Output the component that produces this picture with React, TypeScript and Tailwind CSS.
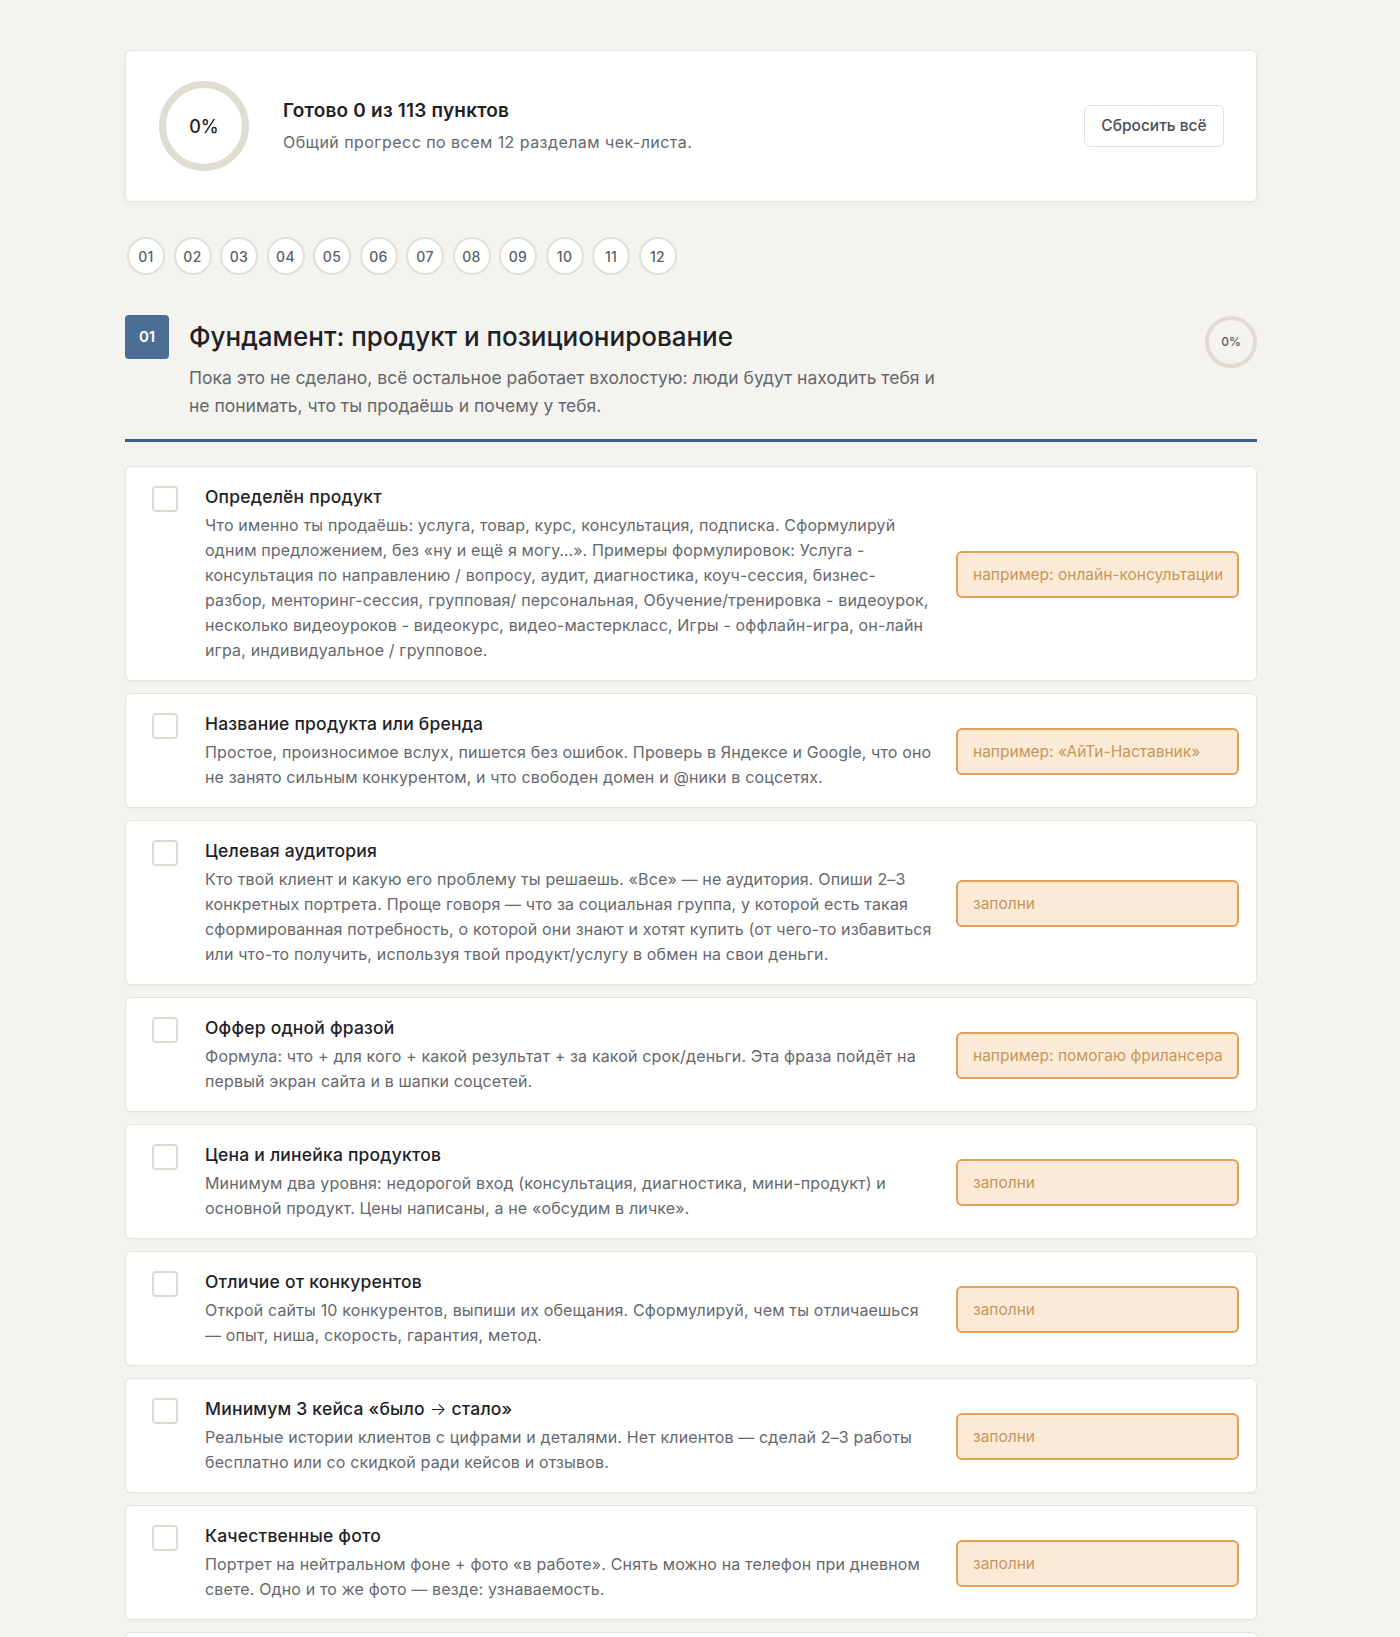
import { useState } from "react";

// Чек-лист запуска: общий прогресс, навигация по разделам и пункты первого раздела.
type Item = { title: string; text: string; placeholder: string };

const sections = ["01", "02", "03", "04", "05", "06", "07", "08", "09", "10", "11", "12"];

const items: Item[] = [
  {
    title: "Определён продукт",
    text: "Что именно ты продаёшь: услуга, товар, курс, консультация, подписка. Сформулируй одним предложением, без «ну и ещё я могу…». Примеры формулировок: Услуга - консультация по направлению / вопросу, аудит, диагностика, коуч-сессия, бизнес-разбор, менторинг-сессия, групповая/ персональная, Обучение/тренировка - видеоурок, несколько видеоуроков - видеокурс, видео-мастеркласс, Игры - оффлайн-игра, он-лайн игра, индивидуальное / групповое.",
    placeholder: "например: онлайн-консультации по карьере",
  },
  {
    title: "Название продукта или бренда",
    text: "Простое, произносимое вслух, пишется без ошибок. Проверь в Яндексе и Google, что оно не занято сильным конкурентом, и что свободен домен и @ники в соцсетях.",
    placeholder: "например: «АйТи-Наставник»",
  },
  {
    title: "Целевая аудитория",
    text: "Кто твой клиент и какую его проблему ты решаешь. «Все» — не аудитория. Опиши 2–3 конкретных портрета. Проще говоря — что за социальная группа, у которой есть такая сформированная потребность, о которой они знают и хотят купить (от чего-то избавиться или что-то получить, используя твой продукт/услугу в обмен на свои деньги.",
    placeholder: "заполни",
  },
  {
    title: "Оффер одной фразой",
    text: "Формула: что + для кого + какой результат + за какой срок/деньги. Эта фраза пойдёт на первый экран сайта и в шапки соцсетей.",
    placeholder: "например: помогаю фрилансерам выйти на 200к",
  },
  {
    title: "Цена и линейка продуктов",
    text: "Минимум два уровня: недорогой вход (консультация, диагностика, мини-продукт) и основной продукт. Цены написаны, а не «обсудим в личке».",
    placeholder: "заполни",
  },
  {
    title: "Отличие от конкурентов",
    text: "Открой сайты 10 конкурентов, выпиши их обещания. Сформулируй, чем ты отличаешься — опыт, ниша, скорость, гарантия, метод.",
    placeholder: "заполни",
  },
  {
    title: "Минимум 3 кейса «было → стало»",
    text: "Реальные истории клиентов с цифрами и деталями. Нет клиентов — сделай 2–3 работы бесплатно или со скидкой ради кейсов и отзывов.",
    placeholder: "заполни",
  },
  {
    title: "Качественные фото",
    text: "Портрет на нейтральном фоне + фото «в работе». Снять можно на телефон при дневном свете. Одно и то же фото — везде: узнаваемость.",
    placeholder: "заполни",
  },
  {
    title: "Единый визуальный стиль",
    text: "Два-три цвета, один-два шрифта, одинаковые обложки. Всё, что видит клиент, должно выглядеть как из одного места.",
    placeholder: "заполни",
  },
];

function Ring({ size, stroke, pct }: { size: number; stroke: number; pct: number }) {
  const r = (size - stroke) / 2;
  const c = 2 * Math.PI * r;
  return (
    <svg width={size} height={size} className="absolute inset-0 -rotate-90">
      <circle cx={size / 2} cy={size / 2} r={r} fill="none" stroke="#dfdcd2" strokeWidth={stroke} />
      <circle
        cx={size / 2}
        cy={size / 2}
        r={r}
        fill="none"
        stroke="#4a6e96"
        strokeWidth={stroke}
        strokeDasharray={c}
        strokeDashoffset={c * (1 - pct / 100)}
        strokeLinecap="round"
      />
    </svg>
  );
}

// стрелка в заголовке — тоньше остального текста
function Title({ text }: { text: string }) {
  const parts = text.split("→");
  if (parts.length === 1) return <>{text}</>;
  return (
    <>
      {parts[0]}
      <span className="font-light">→</span>
      {parts[1]}
    </>
  );
}

function Row({ item, checked, onToggle }: { item: Item; checked: boolean; onToggle: () => void }) {
  return (
    <div className="flex items-center rounded-md border border-[#e7e4dd] bg-white pl-[26px] pr-[17px] pt-[19px] pb-[17px] shadow-[0_1px_2px_rgba(0,0,0,0.03)]">
      <div className="flex flex-1 items-start self-stretch">
        <button
          onClick={onToggle}
          className={
            checked
              ? "h-[26px] w-[26px] shrink-0 rounded-[4px] border-2 border-[#4a6e96] bg-[#4a6e96]"
              : "h-[26px] w-[26px] shrink-0 rounded-[4px] border-2 border-[#dedad0] bg-white"
          }
        />
        <div className="ml-[27px] flex-1 pt-px">
          <div className="text-[17.5px] font-medium leading-[20px] tracking-[0.2px] text-[#1e2227]">
            <Title text={item.title} />
          </div>
          <p className="mt-[6px] text-[16px] leading-[25px] tracking-[0.15px] text-[#65686d]">{item.text}</p>
        </div>
      </div>
      <input
        placeholder={item.placeholder}
        className="ml-5 h-[47px] w-[283px] shrink-0 rounded-md border-2 border-[#e3a057] bg-[#fdead6] px-[15px] text-[15.5px] text-[#6a4a2a] outline-none placeholder:text-[#c6965f]"
      />
    </div>
  );
}

export default function App() {
  const [done, setDone] = useState<Record<number, boolean>>({});
  const count = Object.values(done).filter(Boolean).length;
  const total = 113;
  const pct = Math.round((count / total) * 100);

  return (
    <div className="min-h-screen bg-[#f4f3ef] pt-[50px] pb-10 pr-[18px] font-['Inter',sans-serif] text-[#1e2227]">
      <div className="mx-auto w-[1132px]">
        {/* общий прогресс */}
        <div className="flex h-[152px] items-center rounded-md border border-[#e7e4dd] bg-white pl-[33px] pr-[32px] shadow-[0_2px_6px_rgba(0,0,0,0.04)]">
          <div className="relative flex h-[90px] w-[90px] shrink-0 items-center justify-center">
            <Ring size={90} stroke={7} pct={pct} />
            <span className="relative text-[18px] font-medium">{pct}%</span>
          </div>
          <div className="ml-[34px] flex-1">
            <div className="text-[19px] font-semibold leading-[24px] tracking-[0.2px]">
              Готово {count} из {total} пунктов
            </div>
            <div className="mt-[7px] text-[16px] leading-[24px] tracking-[0.45px] text-[#65686d]">
              Общий прогресс по всем 12 разделам чек-листа.
            </div>
          </div>
          <button
            onClick={() => setDone({})}
            className="h-[42px] w-[140px] rounded-md border border-[#e3e0d8] bg-white text-[15.5px] font-medium text-[#4b5057]"
          >
            Сбросить всё
          </button>
        </div>

        {/* разделы */}
        <div className="mt-[35px] flex gap-[8.5px] pl-[2px]">
          {sections.map((s) => (
            <button
              key={s}
              className="flex h-[38px] w-[38px] items-center justify-center rounded-full border-2 border-[#e1ded5] bg-white text-[14px] font-medium tracking-[0.3px] text-[#5a5f67]"
            >
              {s}
            </button>
          ))}
        </div>

        {/* раздел 01 */}
        <div className="mt-[40px] flex items-start border-b-[3px] border-[#3e5f88] pb-[19px]">
          <div className="flex h-[44px] w-[44px] shrink-0 items-center justify-center rounded-[4px] bg-[#4a6e96] text-[15px] font-semibold text-white">
            01
          </div>
          <div className="ml-5 flex-1">
            <h2 className="text-[26px] font-medium leading-[44px] text-[#1e2227]">
              Фундамент: продукт и позиционирование
            </h2>
            <p className="mt-[5px] max-w-[760px] text-[17.5px] leading-[28px] text-[#65686d]">
              Пока это не сделано, всё остальное работает вхолостую: люди будут находить тебя и не понимать, что ты
              продаёшь и почему у тебя.
            </p>
          </div>
          <div className="relative mt-px flex h-[52px] w-[52px] shrink-0 items-center justify-center">
            <Ring size={52} stroke={4} pct={0} />
            <span className="relative text-[12px] font-medium text-[#5a5f67]">0%</span>
          </div>
        </div>

        <div className="mt-[24px] flex flex-col gap-3">
          {items.map((it, i) => (
            <Row key={i} item={it} checked={!!done[i]} onToggle={() => setDone({ ...done, [i]: !done[i] })} />
          ))}
        </div>
      </div>
    </div>
  );
}
